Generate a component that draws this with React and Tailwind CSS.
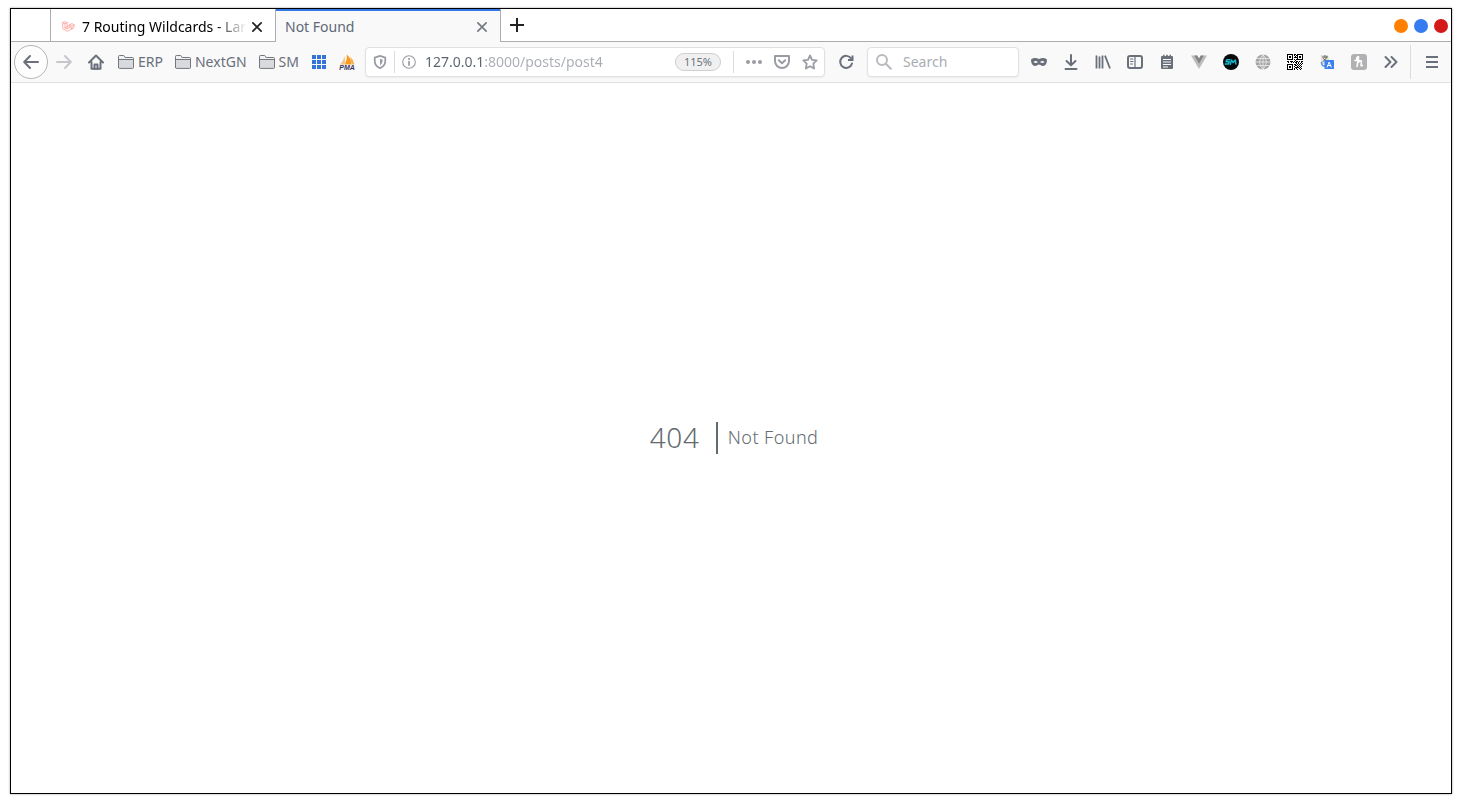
import React from "react";

function Icon({ children, size = 16, className = "" }) {
  return (
    <svg width={size} height={size} viewBox="0 0 16 16" fill="none" stroke="currentColor" strokeWidth="2" strokeLinecap="round" strokeLinejoin="round" className={`shrink-0 ${className}`} aria-hidden="true">
      {children}
    </svg>
  );
}

function ToolButton({ label, children, className = "w-8" }) {
  return (
    <button type="button" aria-label={label} className={`flex h-8 shrink-0 items-center justify-center ${className}`}>
      {children}
    </button>
  );
}

function Folder({ name }) {
  return (
    <button type="button" className="flex h-8 shrink-0 items-center gap-1 px-1.5">
      <Icon>
        <path d="M.5 13.5v-11q0-1 1-1h4q.6 0 .9.6l.8 1.4h7.3q1 0 1 1v9q0 .9-1 .9h-13q-1 0-1-.9z" fill="#d9dadd" stroke="#73777f" strokeWidth="1" />
        <path d="M1 3.2q0-1.2 1-1.2h3.4l1 2H15v1H1z" fill="#f2f2f3" stroke="none" />
        <path d="M1 5.5h14" stroke="#73777f" strokeWidth="1" />
      </Icon>
      <span>{name}</span>
    </button>
  );
}

const QR = [
  "1111110110111111",
  "1000010101100001",
  "1011010010101101",
  "1011010111101101",
  "1000010000100001",
  "1111110101111111",
  "0000000010000000",
  "1101110101101011",
  "0100101011010010",
  "0000000001010101",
  "1111110110101010",
  "1000010011010100",
  "1011010100101010",
  "1011010011110100",
  "1000010101001010",
  "1111110100100100",
];

function QrIcon() {
  return (
    <svg width="16" height="16" viewBox="0 0 16 16" shapeRendering="crispEdges" aria-hidden="true">
      <rect width="16" height="16" fill="#fff" />
      {QR.flatMap((row, y) => [...row].map((c, x) => (c === "1" ? <rect key={`${x}-${y}`} x={x} y={y} width="1" height="1" fill="#000" /> : null)))}
    </svg>
  );
}

function Close({ className }) {
  return (
    <button type="button" aria-label="Close tab" className={`flex h-6 w-5 shrink-0 items-center justify-center ${className}`}>
      <Icon size={12}>
        <path d="M2.500 2.500l11 11M13.500 2.500l-11 11" strokeWidth="2.300" />
      </Icon>
    </button>
  );
}

function TabBar() {
  return (
    <header className="flex h-[33px] shrink-0 bg-white">
      <div className="w-[39px] shrink-0 border-b border-[#adadb0]" />
      <div role="tablist" className="flex">
        <div role="tab" aria-selected="false" className="flex w-[225px] items-center border-b border-l border-[#adadb0] pl-2.5 pr-2 pt-[3px] text-black">
          <Icon size={14} className="mr-[7px] text-[#ff9c96]">
            <path d="M2 3l2.500-1.200L7 3v7l3-1.700V5.500L12.500 4 15 5.500v3L7.500 13 2 10V3l2.500 1.300L7 3M4.500 4.300V9L7 10.300M10 5.500L12.500 7 15 5.500M12.500 7v3M10 8.300l2.500 1.500M4.500 9L10 5.800" strokeWidth=".9" />
          </Icon>
          <span className="min-w-0 flex-1 whitespace-nowrap [mask-image:linear-gradient(to_left,transparent,black_32px)]">7 Routing Wildcards - Lar</span>
          <Close className="text-[#222]" />
        </div>
        <div role="tab" aria-selected="true" className="flex w-[226px] items-center border-x border-[#adadb0] bg-[#f9f9fa] pl-[9px] pr-2 pt-0.5 text-[#5e6874] shadow-[inset_0_2px_0_#3478e8]">
          <span className="flex-1">Not Found</span>
          <Close className="text-[#777b83]" />
        </div>
      </div>
      <div className="flex flex-1 items-center border-b border-[#adadb0]">
        <ToolButton label="New tab">
          <Icon className="text-[#222]">
            <path d="M8 1v14M1 8h14" strokeLinecap="butt" />
          </Icon>
        </ToolButton>
      </div>
      <div className="flex items-center gap-1.5 border-b border-[#adadb0] pr-[3px] pt-0.5">
        <button type="button" aria-label="Minimize" className="size-3.5 rounded-full bg-[#ff8000]" />
        <button type="button" aria-label="Maximize" className="size-3.5 rounded-full bg-[#367bf0]" />
        <button type="button" aria-label="Close window" className="size-3.5 rounded-full bg-[#d41919]" />
      </div>
    </header>
  );
}

function AddressBar() {
  return (
    <div className="ml-1 flex h-[30px] min-w-0 flex-1 items-center rounded border border-[#e0e0e2] bg-white text-[#9a9ca3] shadow-xs">
      <ToolButton label="Tracking protection" className="w-7">
        <Icon size={14}>
          <path d="M8 1L2 3v4q0 5 6 8 6-3 6-8V3z" />
          <path d="M8 4.500v7.500Q11 10 11 6.500V5z" fill="currentColor" stroke="none" />
        </Icon>
      </ToolButton>
      <div className="h-[22px] w-px shrink-0 bg-[#dcdcde]" />
      <ToolButton label="Site information" className="w-7">
        <Icon size={14}>
          <circle cx="8" cy="8" r="7.200" strokeWidth="1.300" />
          <path d="M8 7.500v4" />
          <circle cx="8" cy="4.500" r="1.200" fill="currentColor" stroke="none" />
        </Icon>
      </ToolButton>
      <input
        aria-label="Address"
        defaultValue="127.0.0.1:8000/posts/post4"
        className="ml-0.5 min-w-0 flex-1 bg-[linear-gradient(90deg,#5a626c_57px,#a9adb3_57px)] bg-clip-text text-transparent outline-none"
      />
      <button type="button" className="flex h-[18px] w-[46px] shrink-0 items-center justify-center rounded-full border border-[#cfcfd1] bg-[#f0f0f1] text-[11px] text-[#6a727c]">115%</button>
      <div className="ml-3 mr-1.5 h-[22px] w-px shrink-0 bg-[#dcdcde]" />
      <ToolButton label="Page actions" className="w-7">
        <Icon>
          <g fill="currentColor" stroke="none">
            <circle cx="2" cy="8" r="2" />
            <circle cx="8" cy="8" r="2" />
            <circle cx="14" cy="8" r="2" />
          </g>
        </Icon>
      </ToolButton>
      <ToolButton label="Save to Pocket" className="w-7">
        <Icon>
          <path d="M1 2h14v5a7 7 0 0 1-14 0z" />
          <path d="M4.800 6.200L8 9.200l3.200-3" />
        </Icon>
      </ToolButton>
      <ToolButton label="Bookmark this page" className="w-7">
        <Icon>
          <path d="M8 1.500l2 4.300 4.700.6-3.400 3.300.8 4.800L8 12.200l-4.100 2.300.8-4.800L1.300 6.400 6 5.800z" strokeWidth="1.800" />
        </Icon>
      </ToolButton>
    </div>
  );
}

function Extensions() {
  return (
    <div className="ml-1 flex shrink-0 items-center">
      <ToolButton label="Private window">
        <Icon>
          <path fillRule="evenodd" fill="currentColor" stroke="none" d="M0 5.500Q1.500 3.700 4 4q2 .2 4 1 2-.8 4-1 2.500-.3 4 1.500 0 6.300-4 6.500-1.500 0-2.500-1Q8 9.800 6.500 11q-1 1-2.500 1-4-.2-4-6.500zM2.500 8q2 2 4.500 0Q4.500 6 2.500 8zM9 8q2.500 2 4.500 0Q11.500 6 9 8z" />
        </Icon>
      </ToolButton>
      <ToolButton label="Downloads">
        <Icon>
          <path d="M8 1v10M3.500 7L8 11.300 12.500 7M2.500 15h11" />
        </Icon>
      </ToolButton>
      <ToolButton label="Library">
        <Icon>
          <path d="M1.500 1.500v13M4.500 2.500v12M7.500 1.500v13M10 1.700l5 12.800" strokeWidth="1.800" strokeLinecap="butt" />
        </Icon>
      </ToolButton>
      <ToolButton label="Sidebars">
        <Icon>
          <rect x="1" y="2" width="14" height="12" rx="2" />
          <path d="M8 2v12M3.500 5h2.500M3.500 7.500h2.500M3.500 10h2" strokeWidth="1.200" />
        </Icon>
      </ToolButton>
      <ToolButton label="Notes">
        <Icon>
          <path d="M2 3q0-1 1-1h1V.8h1.500V2h1.700V.8h1.600V2h1.700V.8H12V2h1q1 0 1 1v11q0 1-1 1H3q-1 0-1-1z" fill="currentColor" stroke="none" />
          <path d="M4 5.500h8M4 8h8M4 10.500h8M4 13h5" stroke="#f9f9fa" strokeWidth="1" strokeLinecap="butt" />
        </Icon>
      </ToolButton>
      <ToolButton label="Vue devtools">
        <Icon>
          <path d="M0 1.500h6.200L8 4.500l1.800-3H16L8 15z" fill="#bcbcbc" stroke="none" />
          <path d="M3.200 1.500h3L8 4.500l1.800-3h3L8 9.800z" fill="#858585" stroke="none" />
        </Icon>
      </ToolButton>
      <ToolButton label="SM">
        <Icon>
          <circle cx="8" cy="8" r="8" fill="#080b0d" stroke="none" />
          <path d="M7 5.800H3.800L3 7.700h3.200L5.400 10H2.200M7.300 10.300l1.300-4.200 1.500 2.500 2.200-2.600.6 4" stroke="#19b5cc" strokeWidth="1.500" />
        </Icon>
      </ToolButton>
      <ToolButton label="Proxy">
        <Icon>
          <circle cx="8" cy="8" r="7.500" fill="#a4a4a4" stroke="none" />
          <path d="M8 0v16M0 8h16M1.500 4.500h13M1.500 11.500h13M8 .5Q1 8 8 15.500M8 .5q7 7.500 0 15" stroke="#eee" strokeWidth=".8" />
        </Icon>
      </ToolButton>
      <ToolButton label="QR code">
        <QrIcon />
      </ToolButton>
      <ToolButton label="Translate">
        <Icon>
          <path d="M1.500 1H9l2 9H3z" fill="#dfdfd5" stroke="none" />
          <path d="M3.500 3h5M6 1.500V3M7.800 3Q7 6 4 7.500M4.500 4.500L8 8" stroke="#66685f" strokeWidth="1" />
          <path d="M2.500 8.500q.2 3.500 3.500 3.800" stroke="#5b94ee" strokeWidth="1.600" />
          <rect x="5.500" y="6" width="9.500" height="9" rx=".5" fill="#3b82f0" stroke="none" />
          <path d="M8.200 13l2-5 2 5M9 11.500h2.500" stroke="#fff" strokeWidth="1" />
        </Icon>
      </ToolButton>
      <ToolButton label="Honey">
        <Icon>
          <rect width="16" height="16" rx="3" fill="#b1b1b3" stroke="none" />
          <path d="M6 12.500L7.500 4q.5-1.500-.6-1.300Q5.500 3 5.600 6M4 6.500h4.500M6.700 9q3-3.500 3.800-1.600l-.6 3.600q0 1.400 1.600.4" stroke="#fff" strokeWidth="1.500" />
        </Icon>
      </ToolButton>
      <ToolButton label="More tools">
        <Icon>
          <path d="M2.500 3l5 5-5 5M8.500 3l5 5-5 5" />
        </Icon>
      </ToolButton>
      <div className="mx-[3px] h-[34px] w-px bg-[#dcdcde]" />
      <ToolButton label="Menu" className="w-9">
        <Icon>
          <path d="M2 3h12M2 8h12M2 13h12" strokeLinecap="butt" />
        </Icon>
      </ToolButton>
    </div>
  );
}

function Toolbar() {
  return (
    <nav className="flex h-[41px] shrink-0 items-center border-b border-[#e0e0e2] bg-[#f9f9fa] pl-[3px] pr-px text-[#6a707a]">
      <button type="button" aria-label="Back" className="flex size-[34px] shrink-0 items-center justify-center rounded-full border border-[#b5b5b8] bg-[#fdfdfd]">
        <Icon>
          <path d="M15 8H1.500M7 2L1.200 8 7 14" />
        </Icon>
      </button>
      <ToolButton label="Forward">
        <Icon className="text-[#c6c7ca]">
          <path d="M1 8h13.500M9 2l5.800 6L9 14" />
        </Icon>
      </ToolButton>
      <ToolButton label="Home">
        <Icon>
          <path d="M1 8.500L8 1.500l7 7M3.500 8v6.800h9V8" />
          <path d="M6.500 15v-4.500h3V15" />
        </Icon>
      </ToolButton>
      <Folder name="ERP" />
      <Folder name="NextGN" />
      <Folder name="SM" />
      <ToolButton label="Apps" className="w-7">
        <svg width="14" height="14" viewBox="0 0 14 14" fill="#3474d8" aria-hidden="true">
          <path d="M0 0h4v4H0zM5 0h4v4H5zM10 0h4v4h-4zM0 5h4v4H0zM5 5h4v4H5zM10 5h4v4h-4zM0 10h4v4H0zM5 10h4v4H5zM10 10h4v4h-4z" />
        </svg>
      </ToolButton>
      <ToolButton label="phpMyAdmin" className="w-7">
        <svg width="16" height="16" viewBox="0 0 16 16" aria-hidden="true">
          <path d="M1 10.500Q4.500 7 5.500 2L6.500 10.500z" fill="#f6c48a" />
          <path d="M6 10.500Q8.500 5 7.800.5 12 4 12.500 10.500z" fill="#f89a1c" />
          <path d="M11 2.500q3.500 3 4.500 8h-2.800z" fill="#f9b056" />
          <text x="8" y="15.500" textAnchor="middle" fontSize="7" fontWeight="800" fontStyle="italic" fill="#34345c" fontFamily="Liberation Sans, sans-serif">PMA</text>
        </svg>
      </ToolButton>
      <AddressBar />
      <ToolButton label="Reload" className="ml-[5px] w-8">
        <Icon>
          <path d="M13.200 4.500A6 6 0 1 0 14 9.500" />
          <path d="M14.500 1.500V6H10" strokeLinecap="butt" strokeLinejoin="miter" />
        </Icon>
      </ToolButton>
      <label className="ml-[5px] flex h-[30px] w-[152px] shrink-0 items-center rounded border border-[#e0e0e2] bg-white pl-2 text-[#b9babf] shadow-xs">
        <Icon>
          <circle cx="6" cy="6" r="5" />
          <path d="M9.800 9.800l5 5" />
        </Icon>
        <input type="search" aria-label="Search" placeholder="Search" className="ml-[11px] w-full min-w-0 bg-transparent outline-none placeholder:text-[#a9adb3]" />
      </label>
      <Extensions />
    </nav>
  );
}

export default function App() {
  return (
    <div className="flex h-screen bg-white px-2.5 pb-2.5 pt-2 font-['Noto_Sans',sans-serif] text-sm">
      <div className="flex min-w-0 flex-1 flex-col border border-black bg-white shadow-[0_0_2px_#999]">
        <TabBar />
        <Toolbar />
        <main className="flex flex-1 items-center justify-center font-light text-[#636b6f]">
          <h1 className="border-r-2 border-[#636b6f] px-4 pb-0.5 text-[28px] leading-[30px] tracking-wide">404</h1>
          <p className="px-2.5 pb-0.5 text-lg tracking-wide">Not Found</p>
        </main>
      </div>
    </div>
  );
}
